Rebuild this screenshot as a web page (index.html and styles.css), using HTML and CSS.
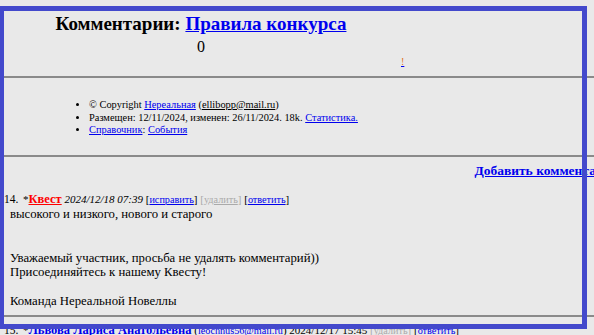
FILE: index.html
```html
<!DOCTYPE html>
<html lang="ru">
<head>
  <meta charset="UTF-8"><title>Комментарии: Правила конкурса</title>
  <link rel="stylesheet" href="styles.css">
</head>
<body>
  <div class="page">

    <!-- Title -->
    <div class="head">
      <h3>Комментарии: <a href="#">Правила конкурса</a></h3>
      <div class="count">0</div>
    </div>
    <div class="mark"><a href="#">!</a></div>
    <hr>

    <!-- Info -->
    <ul class="info">
      <li>© Copyright <a href="#">Нереальная</a> (<a class="mail" href="#">ellibopp@mail.ru</a>)</li>
      <li>Размещен: 12/11/2024, изменен: 26/11/2024. 18k. <a href="#">Статистика.</a></li>
      <li><a href="#">Справочник</a>: <a href="#">События</a></li>
    </ul>
    <hr>

    <div class="add"><a href="#">Добавить комментарий</a></div>

    <!-- Comments -->
    <div class="comment">
      <div class="meta">
        <span class="num">14.</span>*<a class="author" href="#">Квест</a>
        <i>2024/12/18 07:39</i>
        [<a href="#">исправить</a>] <span class="off">[<a href="#">удалить</a>]</span> [<a href="#">ответить</a>]
      </div>
      <div class="text">
        высокого и низкого, нового и старого<br><br><br>
        Уважаемый участник, просьба не удалять комментарий))<br>
        Присоединяйтесь к нашему Квесту!<br><br>
        Команда Нереальной Новеллы
      </div>
    </div>
    <hr>

    <div class="comment">
      <div class="meta">
        <span class="num">15.</span>*<a class="author2" href="#">Львова Лариса Анатольевна</a>
        (<a class="mail" href="#">leochnus56@mail.ru</a>)
        2024/12/17 15:45 <span class="off">[<a href="#">удалить</a>]</span> [<a href="#">ответить</a>]
      </div>
    </div>
  </div>

  <!-- highlight frame -->
  <div class="frame"></div>
</body>
</html>
```

FILE: styles.css
```css
* { margin:0; padding:0; box-sizing:border-box }
html, body { background:#e9e9e9; overflow:hidden; }
body { font-family:"Liberation Serif", "Times New Roman", serif; color:#000; width:594px; height:335px; position:relative; }

a { color:#0000ee; }

.page { width:640px; }

/* Title */
.head { width:402px; text-align:center; padding-top:13px; }
.head h3 { font-size:19px; font-weight:bold; line-height:22px; }
.count { font-size:16px; line-height:18px; margin-top:3px; }
.mark { padding-left:401px; font-size:10px; line-height:12px; margin-top:0; }
.mark a { color:#e07020; text-decoration-color:#0000ee; }

hr { border:none; border-top:2px solid #8a8a8a; margin:0; }
.page > hr:nth-of-type(1) { margin-top:8px; }

/* Info list */
.info { font-size:10.4px; line-height:12.5px; padding:21px 0 0 89px; height:77px; }
.info .mail { color:#000; }

/* Add link */
.add { text-align:right; padding:6px 21px 0 0; font-size:13.5px; font-weight:bold; line-height:16px; }

/* Comments */
.comment { padding-left:4px; }
.meta { font-size:11px; line-height:14px; margin-top:13px; }
.meta .num { display:inline-block; width:19px; font-size:11.5px; }
.meta a { font-size:10.2px; }
.meta .author { color:#f00; font-weight:bold; font-size:12.5px; }
.meta .author2 { font-weight:bold; font-size:12.5px; }
.meta i { font-size:11px; }
.off, .off a { color:#aaa; }
.text { font-size:12.75px; line-height:14.5px; padding:0 0 6px 6px; }
.comment:last-child .meta { margin-top:6px; }

/* Highlight overlay */
.frame { position:absolute; left:-1px; top:6px; width:588px; height:323px; border:5px solid #4349cc; }
```
